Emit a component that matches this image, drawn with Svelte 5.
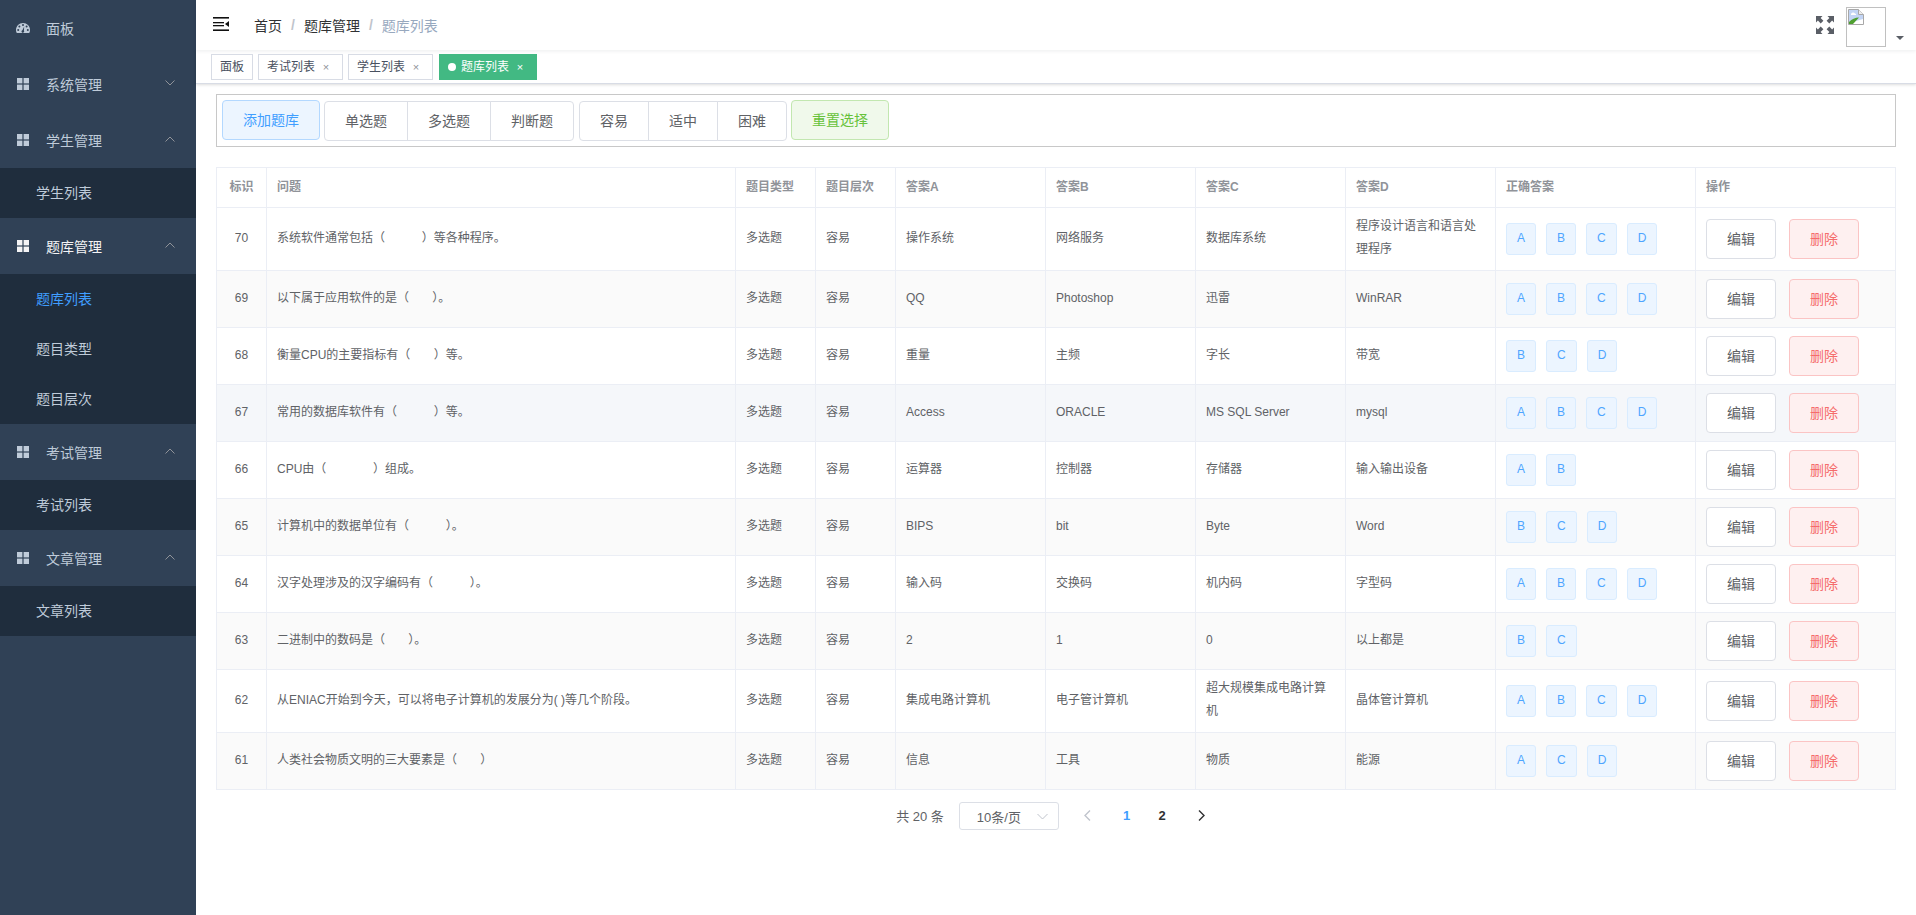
<script>
  const sp = (n) => '\u00a0'.repeat(n);
  const nav = [
    { title: '系统管理', open: false, children: [] },
    { title: '学生管理', open: true, children: [{ t: '学生列表' }] },
    { title: '题库管理', open: true, active: true, children: [{ t: '题库列表', active: true }, { t: '题目类型' }, { t: '题目层次' }] },
    { title: '考试管理', open: true, children: [{ t: '考试列表' }] },
    { title: '文章管理', open: true, children: [{ t: '文章列表' }] }
  ];
  const tags = [
    { t: '面板' },
    { t: '考试列表', close: true },
    { t: '学生列表', close: true },
    { t: '题库列表', close: true, active: true }
  ];
  const heads = ['标识', '问题', '题目类型', '题目层次', '答案A', '答案B', '答案C', '答案D', '正确答案', '操作'];
  const widths = [50, 469, 80, 80, 150, 150, 150, 150, 200, 200];
  const rows = [
    [70, `系统软件通常包括（${sp(11)}）等各种程序。`, '操作系统', '网络服务', '数据库系统', '程序设计语言和语言处理程序', 'ABCD'],
    [69, `以下属于应用软件的是（${sp(7)}）。`, 'QQ', 'Photoshop', '迅雷', 'WinRAR', 'ABCD'],
    [68, `衡量CPU的主要指标有（${sp(7)}）等。`, '重量', '主频', '字长', '带宽', 'BCD'],
    [67, `常用的数据库软件有（${sp(11)}）等。`, 'Access', 'ORACLE', 'MS SQL Server', 'mysql', 'ABCD'],
    [66, `CPU由（${sp(14)}）组成。`, '运算器', '控制器', '存储器', '输入输出设备', 'AB'],
    [65, `计算机中的数据单位有（${sp(11)}）。`, 'BIPS', 'bit', 'Byte', 'Word', 'BCD'],
    [64, `汉字处理涉及的汉字编码有（${sp(11)}）。`, '输入码', '交换码', '机内码', '字型码', 'ABCD'],
    [63, `二进制中的数码是（${sp(7)}）。`, '2', '1', '0', '以上都是', 'BC'],
    [62, '从ENIAC开始到今天，可以将电子计算机的发展分为( )等几个阶段。', '集成电路计算机', '电子管计算机', '超大规模集成电路计算机', '晶体管计算机', 'ABCD'],
    [61, `人类社会物质文明的三大要素是（${sp(7)}）`, '信息', '工具', '物质', '能源', 'ACD']
  ];
</script>

<div class="layout">
  <aside class="sidebar">
    <div class="menu-title">
      <svg class="mi gauge" width="14" height="10" viewBox="0 0 14 10">
        <path d="M7 0C3.1 0 0 3.1 0 7c0 1.2.3 2.2.8 3h12.4c.5-.8.8-1.8.8-3 0-3.9-3.1-7-7-7z" fill="#bfcbd9" />
        <circle cx="7" cy="2" r="1" fill="#304156" />
        <circle cx="3.4" cy="3.6" r="1" fill="#304156" />
        <circle cx="10.6" cy="3.6" r="1" fill="#304156" />
        <circle cx="2.2" cy="7" r="1" fill="#304156" />
        <circle cx="11.8" cy="7" r="1" fill="#304156" />
        <path d="M8.2 3.4 6.4 7.2a1.3 1.3 0 1 0 1.5.5z" fill="#304156" />
      </svg>
      <span>面板</span>
    </div>
    {#each nav as g}
      <div class="menu-title" class:on={g.active}>
        <svg class="mi" width="12" height="12" viewBox="0 0 12 12" fill="currentColor">
          <rect width="5.4" height="5.4" /><rect x="6.6" width="5.4" height="5.4" />
          <rect y="6.6" width="5.4" height="5.4" /><rect x="6.6" y="6.6" width="5.4" height="5.4" />
        </svg>
        <span>{g.title}</span>
        <svg class="chev" width="10" height="6" viewBox="0 0 10 6" fill="none" stroke="#909399">
          {#if g.open}<path d="M.5 5.5 5 1l4.5 4.5" />{:else}<path d="M.5.5 5 5 9.5.5" />{/if}
        </svg>
      </div>
      {#each g.children as c}
        <div class="menu-item" class:on={c.active}>{c.t}</div>
      {/each}
    {/each}
  </aside>

  <main class="main">
    <header class="navbar">
      <svg class="hamburger" width="16" height="14" viewBox="0 0 16 14" fill="#111">
        <rect width="16" height="1.6" />
        <rect y="5" width="11" height="1.3" />
        <rect y="8" width="11" height="1.3" />
        <rect y="12.4" width="16" height="1.6" />
        <path d="M16 4v6l-4-3z" />
      </svg>
      <nav class="crumbs">
        <span>首页</span><i>/</i><span>题库管理</span><i>/</i><span class="last">题库列表</span>
      </nav>
      <svg class="fs" width="18" height="18" viewBox="0 0 18 18" fill="#5a5e66">
        <path d="M0 0h6.5L4.6 1.9 7.4 4.7 4.7 7.4 1.9 4.6 0 6.5z" />
        <path d="M18 0v6.5l-1.9-1.9-2.8 2.8-2.7-2.7 2.8-2.8L11.5 0z" />
        <path d="M0 18v-6.5l1.9 1.9 2.8-2.8 2.7 2.7-2.8 2.8 1.9 1.9z" />
        <path d="M18 18h-6.5l1.9-1.9-2.8-2.8 2.7-2.7 2.8 2.8 1.9-1.9z" />
      </svg>
      <div class="avatar">
        <svg width="16" height="16" viewBox="0 0 16 16">
          <path d="M.5.5h10l5 5v10H.5z" fill="#fff" stroke="#a8a8a8" />
          <path d="M1 1h9.5v5H15v4L1 14z" fill="#c3d5f5" />
          <path d="M3 5c1-2 3-2 4-.5 1 .2 1.5 1 1 1.5H3z" fill="#fff" />
          <path d="M1 15v-2c3-3 6-4.500 10-4.500L5 15z" fill="#4fa030" />
          <path d="M10.500.5v5h5" fill="#eee" stroke="#a8a8a8" />
        </svg>
      </div>
      <span class="caret"></span>
    </header>

    <div class="tags">
      {#each tags as t}
        <span class="tag" class:active={t.active}>
          {#if t.active}<b class="dot"></b>{/if}{t.t}{#if t.close}<em>×</em>{/if}
        </span>
      {/each}
    </div>

    <section class="content">
      <div class="toolbar">
        <button class="btn primary">添加题库</button>
        <div class="group">
          <button class="btn">单选题</button><button class="btn">多选题</button><button class="btn">判断题</button>
        </div>
        <div class="group second">
          <button class="btn">容易</button><button class="btn">适中</button><button class="btn">困难</button>
        </div>
        <button class="btn success">重置选择</button>
      </div>

      <div class="table-wrap">
        <table>
          <colgroup>
            {#each widths as w}<col style="width:{w}px" />{/each}
          </colgroup>
          <thead>
            <tr>
              {#each heads as h, i}<th class:center={i === 0}><div class="cell">{h}</div></th>{/each}
            </tr>
          </thead>
          <tbody>
            {#each rows as r, i}
              <tr class:stripe={i % 2 === 1} class:hover={r[0] === 67}>
                <td class="center"><div class="cell txt">{r[0]}</div></td>
                <td><div class="cell txt">{r[1]}</div></td>
                <td><div class="cell txt">多选题</div></td>
                <td><div class="cell txt">容易</div></td>
                <td><div class="cell txt">{r[2]}</div></td>
                <td><div class="cell txt">{r[3]}</div></td>
                <td><div class="cell txt">{r[4]}</div></td>
                <td><div class="cell txt">{r[5]}</div></td>
                <td>
                  <div class="cell answers">
                    {#each r[6].split('') as a}<span class="ans">{a}</span>{/each}
                  </div>
                </td>
                <td>
                  <div class="cell ops">
                    <button class="btn solo">编辑</button>
                    <button class="btn danger">删除</button>
                  </div>
                </td>
              </tr>
            {/each}
          </tbody>
        </table>
      </div>

      <div class="pager">
        <span class="total">共 20 条</span>
        <div class="select">
          <span>10条/页</span>
          <svg width="11" height="7" viewBox="0 0 11 7" fill="none" stroke="#c0c4cc"><path d="M.5 1 5.500 6 10.500 1" /></svg>
        </div>
        <span class="pg prev">
          <svg width="7" height="11" viewBox="0 0 7 11" fill="none" stroke="#c0c4cc" stroke-width="1.4"><path d="M6 .5 1 5.500l5 5" /></svg>
        </span>
        <span class="pg num cur">1</span>
        <span class="pg num">2</span>
        <span class="pg next">
          <svg width="7" height="11" viewBox="0 0 7 11" fill="none" stroke="#303133" stroke-width="1.4"><path d="M1 .5l5 5-5 5" /></svg>
        </span>
      </div>
    </section>
  </main>
</div>

<style>
  :global(body) {
    margin: 0;
    background: #fff;
    font-family: "Liberation Sans", "Noto Sans CJK SC", sans-serif;
  }
  .layout { display: flex; min-height: 915px; }

  .sidebar { width: 196px; flex: none; background: #304156; color: #bfcbd9; font-size: 14px; }
  .menu-title { height: 56px; display: flex; align-items: center; padding-left: 17px; box-sizing: border-box; color: #bfcbd9; }
  .menu-title.on { color: #f4f4f5; }
  .menu-title span { margin-left: 17px; }
  .menu-title .gauge { margin-left: -1px; }
  .menu-title .gauge + span { margin-left: 16px; }
  .mi { flex: none; margin-top: -1px; }
  .chev { margin-left: auto; margin-right: 21px; margin-top: -3px; }
  .menu-item { height: 50px; line-height: 51px; padding-left: 36px; background: #1f2d3d; color: #bfcbd9; }
  .menu-item.on { color: #409eff; }

  .main { flex: 1; min-width: 0; }
  .navbar { height: 50px; display: flex; align-items: center; position: relative; z-index: 2; background: #fff; box-shadow: 0 1px 4px rgba(0, 21, 41, .08); padding-left: 17px; }
  .hamburger { flex: none; margin-top: -2px; }
  .crumbs { margin-left: 25px; font-size: 14px; color: #303133; display: flex; align-items: center; margin-top: -1px; }
  .crumbs i { font-style: normal; color: #c0c4cc; margin: 0 9px; font-weight: 700; }
  .crumbs .last { color: #97a8be; }
  .fs { margin-left: auto; flex: none; }
  .avatar { width: 40px; height: 40px; box-sizing: border-box; border: 1px solid #c0c0c0; margin-left: 12px; padding: 1px; margin-top: 4px; }
  .avatar svg { display: block; }
  .caret { width: 0; height: 0; border: 4px solid transparent; border-top-color: #5a5e66; border-bottom: 0; margin: 26px 12px 0 10px; }

  .tags { height: 34px; box-sizing: border-box; border-bottom: 1px solid #d8dce5; box-shadow: 0 1px 3px rgba(0, 0, 0, .12), 0 0 3px rgba(0, 0, 0, .04); padding: 4px 0 0 15px; display: flex; gap: 5px; background: #fff; }
  .tag { height: 26px; line-height: 24px; box-sizing: border-box; border: 1px solid #d8dce5; padding: 0 8px; font-size: 12px; color: #495060; background: #fff; display: inline-flex; align-items: center; }
  .tag em { font-style: normal; width: 16px; margin-left: 3px; text-align: center; color: #909399; font-size: 11px; }
  .tag.active { background: #42b983; border-color: #42b983; color: #fff; margin-left: 1px; }
  .tag.active em { color: #fff; }
  .dot { width: 8px; height: 8px; border-radius: 50%; background: #fff; margin-right: 5px; }

  .content { padding: 10px 20px 0; }
  .toolbar { border: 1px solid #c8c8c8; padding: 5px; height: 53px; box-sizing: border-box; display: flex; gap: 4px; align-items: flex-start; }
  .btn { height: 40px; box-sizing: border-box; padding: 0 20px; border: 1px solid #dcdfe6; border-radius: 4px; background: #fff; color: #606266; font: inherit; font-size: 14px; line-height: 1; }
  .primary { color: #409eff; background: #ecf5ff; border-color: #b3d8ff; }
  .success { color: #67c23a; background: #f0f9eb; border-color: #c2e7b0; }
  .danger { color: #f56c6c; background: #fef0f0; border-color: #fbc4c4; }
  .group { display: flex; margin-top: 1px; }
  .group.second { margin-left: 1px; }
  .group .btn { border-radius: 0; margin-left: -1px; }
  .group .btn:first-child { margin-left: 0; border-radius: 4px 0 0 4px; }
  .group .btn:last-child { border-radius: 0 4px 4px 0; }

  .table-wrap { margin-top: 20px; border-top: 1px solid #ebeef5; border-left: 1px solid #ebeef5; }
  table { width: 100%; table-layout: fixed; border-collapse: separate; border-spacing: 0; font-size: 12px; color: #606266; }
  th, td { padding: 8px 0; border-right: 1px solid #ebeef5; border-bottom: 1px solid #ebeef5; text-align: left; vertical-align: middle; font-weight: 400; }
  th { color: #909399; font-weight: 700; height: 23px; }
  .center { text-align: center; }
  .cell { padding: 0 10px; line-height: 23px; }
  .txt { margin: -1px 0 1px; }
  tr.stripe td { background: #fafafa; }
  tr.hover td { background: #f5f7fa; }
  .answers { display: flex; gap: 10px; align-items: center; }
  .ans { height: 32px; box-sizing: border-box; padding: 0 10px; line-height: 29px; border: 1px solid #d9ecff; border-radius: 3px; background: #ecf5ff; color: #4ea5ff; font-size: 12px; }
  .ops { display: flex; gap: 13px; align-items: center; }
  .solo { width: 70px; padding: 0; }
  .danger { width: 70px; padding: 0; }

  .pager { margin-top: 12px; padding-left: 3px; display: flex; justify-content: center; align-items: center; height: 28px; font-size: 13px; color: #606266; }
  .total { margin-right: 15px; margin-top: -2px; }
  .select { width: 100px; height: 28px; box-sizing: border-box; border: 1px solid #dcdfe6; border-radius: 3px; display: flex; align-items: center; padding: 0 10px 0 17px; justify-content: space-between; margin-right: 11px; }
  .pg { width: 35.5px; text-align: center; display: inline-flex; justify-content: center; align-items: center; height: 28px; margin-top: -2px; }
  .prev { margin-right: 3.5px; }
  .next { margin-left: 3.5px; }
  .num { font-weight: 700; color: #303133; }
  .cur { color: #409eff; }
</style>
